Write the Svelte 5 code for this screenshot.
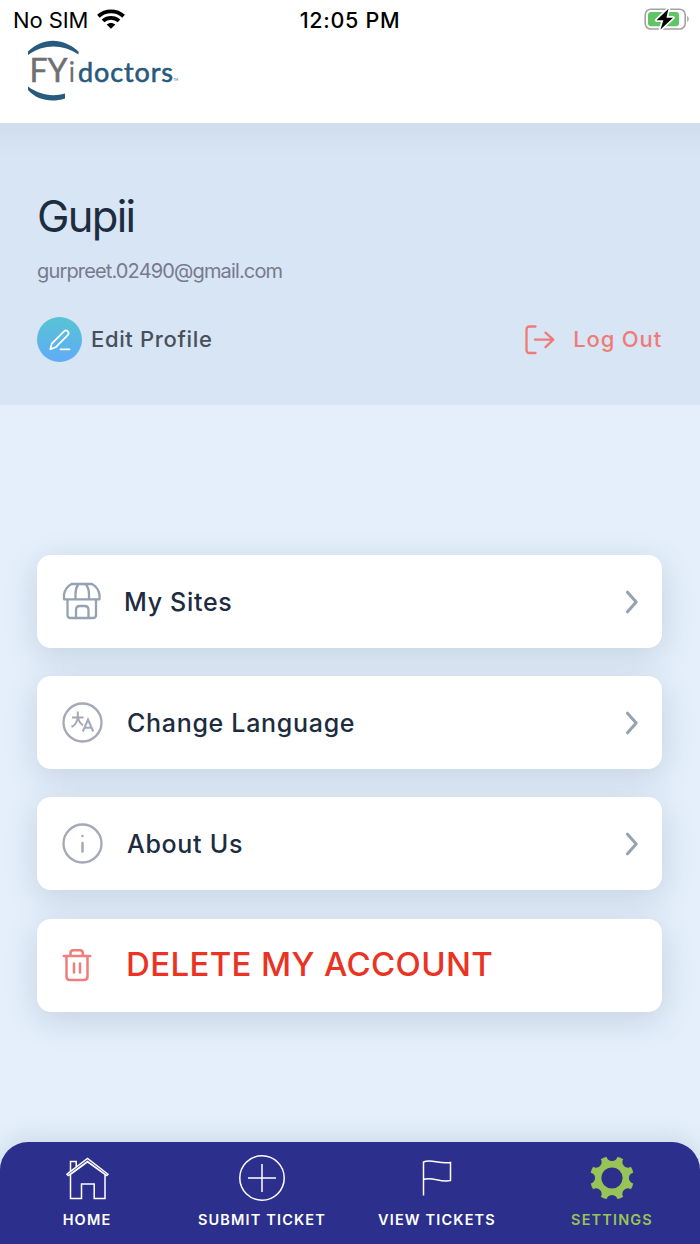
<script>
    const email = 'gurpreet.02490@gmail.com';

    const items = [
        { id: 'sites', label: 'My Sites' },
        { id: 'language', label: 'Change Language' },
        { id: 'about', label: 'About Us' },
        { id: 'delete', label: 'DELETE MY ACCOUNT' }
    ];

    const tabs = [
        { id: 'home', label: 'HOME' },
        { id: 'submit', label: 'SUBMIT TICKET' },
        { id: 'view', label: 'VIEW TICKETS' },
        { id: 'settings', label: 'SETTINGS' }
    ];

    let active = 'settings';

    const notches = [0, 45, 90, 135, 180, 225, 270, 315];
</script>

<div class="screen">
    <header>
        <div class="status">
            <div class="carrier">
                <span class="sim">No SIM</span>
                <svg width="28" height="21" viewBox="0 0 28 21">
                    <g fill="none" stroke="#000" stroke-width="3.9">
                        <path d="M1.4 7.2C8.6.8 19.4.8 26.6 7.2" />
                        <path d="M6 11.9c4.6-4 11.4-4 16 0" />
                    </g>
                    <path d="M9.6 15.6c2.5-2.2 6.3-2.2 8.8 0L14 19.8z" />
                </svg>
            </div>
            <span class="time">12:05 PM</span>
            <svg class="battery" width="46" height="24" viewBox="0 0 46 24">
                <rect x="1.2" y="1.2" width="40" height="19.8" rx="5.5" fill="#fff" stroke="#a3a3a3" stroke-width="1.6" />
                <rect x="4" y="4" width="31" height="14.2" rx="3" fill="#60c565" />
                <path d="M43.2 8v6c2-.8 2-5.2 0-6z" fill="#a3a3a3" />
                <path d="M24.5.8 12.5 12.2h6.8l-2.8 9.3L29 9.8h-6.6z" fill="#000" stroke="#fff" stroke-width="3.4" paint-order="stroke" stroke-linejoin="round" />
            </svg>
        </div>
        <svg class="logo" width="160" height="64" viewBox="0 0 160 64">
            <path d="M2 12.5C17-2 37-1.5 52.5 12.5V15.5C37 5 18 4.5 2 16z" fill="#275a7c" />
            <path d="M2 47.5C12 55 25 58.5 39 54.5V59.5C25 64 11 61 2 51z" fill="#275a7c" />
            <text x="3.5" y="42.5" textLength="38" lengthAdjust="spacingAndGlyphs" class="fy">FY</text>
            <text x="42.5" y="42.5" class="i">i</text>
            <text x="52" y="42.5" textLength="95" lengthAdjust="spacing" class="doctors">doctors</text>
            <text x="147.5" y="41.5" class="tm">TM</text>
        </svg>
    </header>

    <section class="profile">
        <h1>Gupii</h1>
        <p class="email">{email}</p>
        <div class="actions">
            <button class="edit">
                <span class="round">
                    <svg width="24" height="24" viewBox="0 0 24 24" fill="none" stroke="#fff" stroke-width="1.7" stroke-linecap="round" stroke-linejoin="round">
                        <path d="M2.3 21.3 3.8 15.6 16.2 3.2c2.4-2 5.7 1 3.8 3.6L7.6 19.3zM12.5 21.3H21.5" />
                    </svg>
                </span>
                <span class="text">Edit Profile</span>
            </button>
            <button class="logout">
                <svg width="32" height="32" viewBox="0 0 32 32" fill="none" stroke="#ef7b79" stroke-width="2.3" stroke-linecap="round" stroke-linejoin="round">
                    <path d="M11.5 2.5H5.5Q2.5 2.5 2.5 5.5V26Q2.5 29 5.500 29H11.5M11 15.700H29M21.5 8.700 29.300 15.700l-7.800 7.500" />
                </svg>
                <span class="text">Log Out</span>
            </button>
        </div>
    </section>

    <main>
        {#each items as item}
            <button class="card {item.id}">
                {#if item.id === 'sites'}
                    <svg width="40" height="40" viewBox="0 0 40 40" fill="none" stroke="#94a3b3" stroke-width="2.3" stroke-linejoin="round">
                        <path d="M9.5 2h20.500Q36 5 37.500 12.500V17.300H2V12.500Q3.500 5 9.500 2zM5.500 17.300V33Q5.500 36 8.500 36H31Q34 36 34 33V17.300" />
                        <path d="M16.500 2Q13.500 6 13.500 12V17.300M23.500 2Q27 6 27 12V17.300M14 36V28Q14 24 18 24h4.500Q26.500 24 26.500 28V36" />
                    </svg>
                {:else if item.id === 'language'}
                    <svg width="41" height="42" viewBox="0 0 41 42" fill="none" stroke="#a5a8b8">
                        <circle cx="20.5" cy="20.5" r="19" stroke-width="2.3" />
                        <path d="M10 15.500H21.500M15.800 9.500V15.500Q15 22 9.500 25M15.800 16Q17.500 21 21 23.500M20.800 29.500 26 17.500l5.200 12M22.500 25.800h7.200" stroke-width="2" />
                    </svg>
                {:else if item.id === 'about'}
                    <svg width="41" height="42" viewBox="0 0 41 42" fill="none" stroke="#a5a8b8" stroke-linecap="round">
                        <circle cx="20.5" cy="20.5" r="19" stroke-width="2.3" />
                        <path d="M20.5 20V28.500M20.5 13v.1" stroke-width="2.5" />
                    </svg>
                {:else}
                    <svg width="31" height="34" viewBox="0 0 31 34" fill="none" stroke="#ef7f7c" stroke-width="2.5" stroke-linecap="round" stroke-linejoin="round">
                        <path d="M1.800 8H28.200M8.500 7.500V5Q8.500 2.200 11.300 2.200H18Q20.800 2.200 20.800 5V7.500M4.500 8V28.500Q4.500 32 8 32H22Q25.500 32 25.500 28.500V8M12 15.500V24.500M18 15.500V24.500" />
                    </svg>
                {/if}
                <span class="label">{item.label}</span>
                {#if item.id !== 'delete'}
                    <svg class="chevron" width="14" height="24" viewBox="0 0 14 24" fill="none" stroke="#94a2b2" stroke-width="3" stroke-linecap="round" stroke-linejoin="round">
                        <path d="M2.5 2.2 11.2 12l-8.700 9.800" />
                    </svg>
                {/if}
            </button>
        {/each}
    </main>

    <nav>
        {#each tabs as tab}
            <button class="tab" class:active={active === tab.id} on:click={() => (active = tab.id)}>
                <svg width="48" height="48" viewBox="0 0 48 48" fill="none" stroke="#fff" stroke-width="1.5">
                    {#if tab.id === 'home'}
                        <path d="M4 20.2 24.5 4.5 45 20.2l-1.300 1.300L24.500 7.500 5.300 21.500zM7.500 17V7.500h5.700v5M7.500 20.500V44.500H18.500V30H31.200V44.500H42V20.500L24.500 8z" />
                    {:else if tab.id === 'submit'}
                        <circle cx="24" cy="24" r="22.2" />
                        <path d="M24 10V38M10 24H38" />
                    {:else if tab.id === 'view'}
                        <path d="M10.5 41.5V8C18 4.500 26 10.500 37.500 8.500V26.500C27 29 19 22 10.500 25.500" />
                    {:else}
                        <mask id="gear">
                            <circle cx="24" cy="24" r="22" fill="#fff" stroke="none" />
                            {#each notches as angle}
                                <circle cx="24" cy="1.5" r="5.6" fill="#000" stroke="none" transform="rotate({angle} 24 24)" />
                            {/each}
                            <circle cx="24" cy="24" r="10.6" fill="#000" stroke="none" />
                        </mask>
                        <rect width="48" height="48" fill="#98c457" stroke="none" mask="url(#gear)" />
                    {/if}
                </svg>
                <span>{tab.label}</span>
            </button>
        {/each}
    </nav>
</div>

<style>
    :global(body) {
        margin: 0;
        background: #e4effb;
    }

    .screen {
        display: flex;
        flex-direction: column;
        width: 700px;
        height: 1244px;
        overflow: hidden;
        background: #e4effb;
        font-family: Inter, "Liberation Sans", sans-serif;
    }

    button {
        display: flex;
        align-items: center;
        padding: 0;
        border: 0;
        background: transparent;
        font-family: inherit;
    }

    svg {
        display: block;
        flex: none;
    }

    header {
        height: 123px;
        background: #fff;
    }

    .status {
        display: grid;
        grid-template-columns: 1fr auto 1fr;
        align-items: center;
        height: 39px;
        padding: 0 10px 0 13px;
        color: #000;
        font-size: 22px;
    }

    .carrier {
        display: flex;
        align-items: center;
        gap: 9px;
    }

    .sim {
        letter-spacing: -0.1px;
    }

    .time {
        margin-left: -3px;
        font-weight: 550;
        font-size: 21.5px;
        letter-spacing: 0.7px;
    }

    .battery {
        justify-self: end;
    }

    .logo {
        margin-left: 26px;
    }

    .logo text {
        font-family: Lato, sans-serif;
    }

    .fy {
        fill: #707070;
        stroke: #707070;
        stroke-width: 0.5px;
        font-size: 32px;
    }

    .i {
        fill: #707070;
        font-size: 28px;
    }

    .doctors {
        fill: #275a7c;
        stroke: #275a7c;
        stroke-width: 0.6px;
        font-size: 27px;
        font-weight: 400;
    }

    .logo .tm {
        fill: #275a7c;
        font-size: 3px;
    }

    .profile {
        box-sizing: border-box;
        height: 282px;
        padding: 66px 38px 0 37px;
        background: linear-gradient(#cfdded, #d8e5f4 34px);
    }

    h1 {
        margin: 0;
        color: #1d2c40;
        font-size: 43.5px;
        font-weight: 400;
        line-height: 54px;
        letter-spacing: -1.7px;
    }

    .email {
        margin: 15px 0 0;
        color: #777a8d;
        font-size: 20px;
        line-height: 26px;
        letter-spacing: -0.85px;
    }

    .actions {
        display: flex;
        align-items: center;
        justify-content: space-between;
        margin-top: 33px;
    }

    .actions .text {
        padding-bottom: 2px;
    }

    .edit {
        gap: 9px;
        color: #47505b;
        font-size: 22px;
        font-weight: 550;
        letter-spacing: 0.65px;
    }

    .round {
        display: flex;
        align-items: center;
        justify-content: center;
        width: 45px;
        height: 45px;
        border-radius: 50%;
        background: linear-gradient(#57c3d4, #60acf7);
    }

    .logout {
        gap: 17px;
        color: #ef7b79;
        font-size: 22px;
        font-weight: 550;
        letter-spacing: 0.85px;
    }

    main {
        display: flex;
        flex-direction: column;
        gap: 28.2px;
        padding: 150px 37.7px 0 37.4px;
    }

    .card {
        height: 93px;
        padding: 0 23px 0 24.6px;
        border-radius: 14px;
        background: #fff;
        box-shadow: 0 8px 32px rgba(70, 95, 115, 0.2);
        color: #1d2c40;
        font-size: 25px;
        font-weight: 550;
    }

    .label {
        margin-left: 24px;
        letter-spacing: 0.7px;
    }

    .sites .label {
        margin-left: 22px;
    }

    .delete .label {
        margin-left: 33px;
        padding-bottom: 2px;
        color: #ea3323;
        font-size: 33px;
        font-weight: 500;
        letter-spacing: 0.35px;
    }

    .card .chevron {
        margin-left: auto;
    }

    nav {
        display: grid;
        grid-template-columns: repeat(4, 1fr);
        height: 102px;
        margin-top: auto;
        border-radius: 28px 28px 0 0;
        background: #2c2f8c;
        box-shadow: 0 -4px 24px rgba(70, 95, 115, 0.14);
    }

    .tab {
        flex-direction: column;
        gap: 9px;
        padding: 12px 1px 0 0;
        color: #fff;
        font-size: 14.5px;
        font-weight: 600;
        line-height: 18px;
        letter-spacing: 1.15px;
    }

    .active {
        color: #98c457;
    }
</style>
